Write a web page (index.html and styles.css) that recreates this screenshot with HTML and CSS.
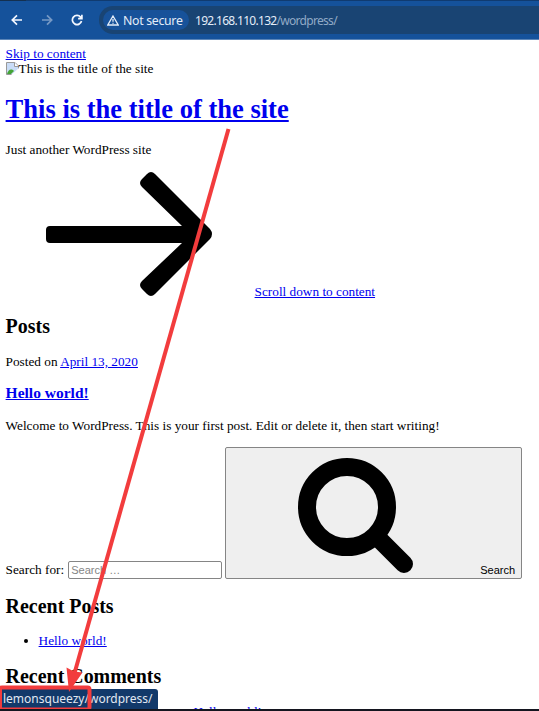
FILE: index.html
```html
<!DOCTYPE html>
<html lang="en">
<head>
<meta charset="utf-8">
<title>This is the title of the site</title>
<link rel="stylesheet" href="styles.css">
</head>
<body>
<header class="toolbar">
  <svg class="nav-icon" viewBox="0 0 12 12"><path d="M11 6H1.5M6 1.3L1.3 6L6 10.7"/></svg>
  <svg class="nav-icon muted" viewBox="0 0 12 12"><path d="M1 6H10.5M6 1.3L10.7 6L6 10.7"/></svg>
  <svg class="nav-icon" viewBox="0 0 12 12"><path d="M10.5 7A4.6 4.6 0 1 1 9.6 3.1L10.8 4.4M10.9 .8V4.6H7.1"/></svg>
  <div class="address">
    <span class="security"><svg class="warning" viewBox="0 0 12 11"><path d="M6 1L11.2 10H.8ZM6 4V6.8M6 7.7V8.8"/></svg><span class="security-text">Not secure</span></span>
    <span class="url">192.168.110.132<span class="path">/wordpress/</span></span>
  </div>
</header>
<main class="page">
  <div class="skip"><a href="#content">Skip to content</a></div>
  <div class="logo"><svg class="broken" viewBox="0 0 13 13"><path d="M.5 .5H9L12.5 4V12.5H.5Z" fill="#c9dcf7" stroke="#999"/><path d="M8.5 .5V4.5H12.5" fill="#fff" stroke="#999"/><path d="M1 12C2 8 5 6 8 9L5 12Z" fill="#45a536"/><path d="M5 13L13 6V13Z" fill="#fff"/></svg><span>This is the title of the site</span></div>
  <h1><a href="#">This is the title of the site</a></h1>
  <p class="tagline">Just another WordPress site</p>
  <div class="scroll">
    <svg class="arrow" viewBox="0 0 168 128"><path d="M5 56H137L97 17Q93 13 97 9L102 4Q106 0 110 4L165 59Q169 64 165 69L110 124Q106 128 102 124L97 119Q93 115 97 111L137 73H5Q1 73 1 69V60Q1 56 5 56Z"/></svg>
    <a href="#content">Scroll down to content</a>
  </div>
  <h2 class="posts">Posts</h2>
  <p class="date">Posted on <a href="#">April 13, 2020</a></p>
  <h3><a href="#">Hello world!</a></h3>
  <p class="welcome">Welcome to WordPress. This is your first post. Edit or delete it, then start writing!</p>
  <form class="search">
    <label for="q">Search for:</label>
    <input id="q" type="text" placeholder="Search …">
    <button type="button"><svg class="lens" viewBox="0 0 118 118"><circle cx="50" cy="50" r="40"/><path d="M82 82L107 107"/></svg><span>Search</span></button>
  </form>
  <h2 class="recent">Recent Posts</h2>
  <ul class="list"><li><a href="#">Hello world!</a></li></ul>
  <h2 class="comments">Recent Comments</h2>
  <div class="comment"><a href="#">Hello world!</a></div>
</main>
<div class="status">lemonsqueezy/wordpress/</div>
<svg class="annotation" viewBox="0 0 539 711"><path class="line" d="M228.5 129L74 675"/><path class="head" d="M69 692L66.5 667.5L74 671.5L82.5 672.5Z"/><rect x="0" y="687.5" width="89.5" height="22" rx="2"/></svg>
<div class="bottom-edge"></div>
<div class="tab-edge"></div>
</body>
</html>
```
FILE: styles.css
```css
* { box-sizing: border-box; }
html, body { margin: 0; height: 711px; overflow: hidden; }
body { background: #fff; color: #000; font: 13.28px/15px "Liberation Serif", serif; position: relative; }
a { color: #0000ee; }
h1, h2, h3, p, ul { margin: 0; }
.toolbar { height: 40px; background: #15529b; border-top: 1px solid #103b70; border-bottom: 1px solid #5c86b8; display: flex; align-items: center; padding-left: 11px; font-family: "Noto Sans", sans-serif; color: #e4edf8; }
.tab-edge { position: absolute; left: 0; top: 0; width: 26px; height: 1px; background: #14304f; }
.nav-icon { width: 12px; height: 12px; margin-right: 18px; fill: none; stroke: #f4f8ff; stroke-width: 1.7; }
.nav-icon.muted { stroke: #7699c5; }
.address { flex: 1; height: 28px; margin-left: -2px; border-radius: 14px 0 0 14px; background: #194473; display: flex; align-items: center; padding-left: 4px; }
.security { width: 86px; height: 20px; border-radius: 10px; background: #17529a; display: flex; align-items: center; padding-left: 4px; }
.warning { width: 12px; height: 11px; margin-right: 4px; fill: none; stroke: #e4edf8; stroke-width: 1.3; }
.security-text { font-size: 12.3px; letter-spacing: -.3px; white-space: nowrap; }
.url { font-size: 12px; letter-spacing: -.7px; margin-left: 6px; white-space: nowrap; }
.path { color: #91aac6; }
.page { padding: 6px 0 0 5.6px; height: 671px; overflow: hidden; }
.skip, .logo { height: 15px; }
.logo { display: flex; }
.broken { width: 13px; height: 13px; margin-top: 1px; }
h1 { font-size: 26.56px; line-height: 30px; margin-top: 18px; }
.tagline { margin-top: 18px; }
.scroll { height: 128px; margin: 12.5px 0 0 39.8px; display: flex; align-items: flex-end; }
.scroll a { position: relative; top: 1px; }
.arrow { width: 168px; height: 128px; margin-right: 41.2px; }
h2 { font-size: 19.95px; line-height: 24px; }
.posts { margin-top: 16.5px; }
.date { margin-top: 16px; }
h3 { font-size: 15.5px; line-height: 18px; margin-top: 15px; }
.welcome { margin-top: 16px; }
.search { height: 132px; margin-top: 14px; display: flex; align-items: flex-end; }
.search label { margin: 0 4px 2px 0; white-space: nowrap; }
.search input { width: 154px; height: 18px; margin-right: 3px; padding: 0 2px; border: 1px solid #858585; border-radius: 2px; font: 11.05px "Liberation Sans", sans-serif; }
.search input::placeholder { color: #858585; }
.search button { width: 297px; height: 132px; padding: 0; border: 1px solid #858585; border-radius: 2px; background: #efefef; color: #000; font: 11.05px/13px "Liberation Sans", sans-serif; display: flex; align-items: flex-end; }
.lens { width: 118px; height: 118px; margin: 0 65px 3px 71px; fill: none; stroke: #000; stroke-width: 18; stroke-linecap: round; }
.search button span { margin-bottom: 1px; }
.recent { margin-top: 15px; }
.list { margin-top: 15px; padding-left: 33px; }
.comments { margin-top: 16px; }
.comment { margin: 16px 0 0 188px; }
.status { position: absolute; left: 0; top: 689px; width: 158px; height: 21px; padding-left: 3px; border-radius: 0 3px 0 0; background: #12396a; color: #e1e8f2; font: 12px/20px "Noto Sans", sans-serif; white-space: nowrap; }
.annotation { position: absolute; left: 0; top: 0; width: 539px; height: 711px; fill: none; stroke: #f23c3d; stroke-width: 4; }
.annotation .head { fill: #f23c3d; stroke: none; }
.bottom-edge { position: absolute; left: 0; right: 0; top: 709px; height: 2px; background: #14151f; }
```
